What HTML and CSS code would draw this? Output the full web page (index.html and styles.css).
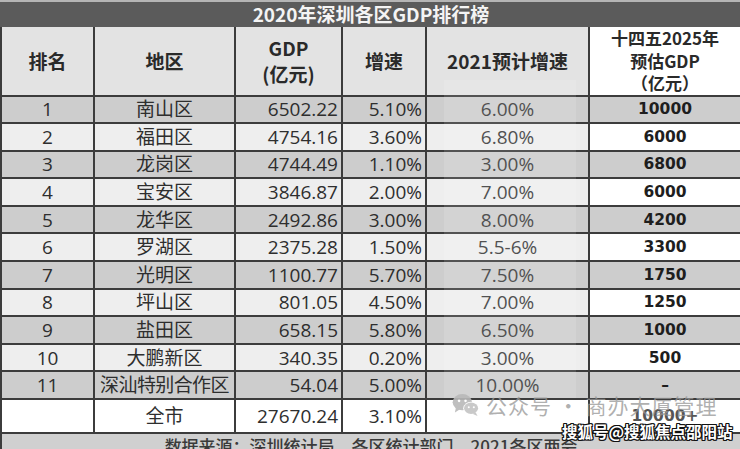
FILE: index.html
```html
<!DOCTYPE html>
<html lang="zh">
<head>
<meta charset="utf-8">
<title>2020年深圳各区GDP排行榜</title>
<link rel="stylesheet" href="styles.css">
</head>
<body>
<div class="page">
  <table class="gdp">
    <colgroup>
      <col class="c1"><col class="c2"><col class="c3"><col class="c4"><col class="c5"><col class="c6">
    </colgroup>
    <thead>
      <tr class="title-row"><th colspan="6">2020年深圳各区GDP排行榜</th></tr>
      <tr class="head-row">
        <th>排名</th>
        <th>地区</th>
        <th>GDP<br>(亿元)</th>
        <th>增速</th>
        <th>2021预计增速</th>
        <th class="plan">十四五2025年<br>预估GDP<br>（亿元）</th>
      </tr>
    </thead>
    <tbody>
      <tr class="odd"><td>1</td><td>南山区</td><td class="num">6502.22</td><td class="num">5.10%</td><td class="fc">6.00%</td><td class="est">10000</td></tr>
      <tr class="even"><td>2</td><td>福田区</td><td class="num">4754.16</td><td class="num">3.60%</td><td class="fc">6.80%</td><td class="est">6000</td></tr>
      <tr class="odd"><td>3</td><td>龙岗区</td><td class="num">4744.49</td><td class="num">1.10%</td><td class="fc">3.00%</td><td class="est">6800</td></tr>
      <tr class="even"><td>4</td><td>宝安区</td><td class="num">3846.87</td><td class="num">2.00%</td><td class="fc">7.00%</td><td class="est">6000</td></tr>
      <tr class="odd"><td>5</td><td>龙华区</td><td class="num">2492.86</td><td class="num">3.00%</td><td class="fc">8.00%</td><td class="est">4200</td></tr>
      <tr class="even"><td>6</td><td>罗湖区</td><td class="num">2375.28</td><td class="num">1.50%</td><td class="fc">5.5-6%</td><td class="est">3300</td></tr>
      <tr class="odd"><td>7</td><td>光明区</td><td class="num">1100.77</td><td class="num">5.70%</td><td class="fc">7.50%</td><td class="est">1750</td></tr>
      <tr class="even"><td>8</td><td>坪山区</td><td class="num">801.05</td><td class="num">4.50%</td><td class="fc">7.00%</td><td class="est">1250</td></tr>
      <tr class="odd"><td>9</td><td>盐田区</td><td class="num">658.15</td><td class="num">5.80%</td><td class="fc">6.50%</td><td class="est">1000</td></tr>
      <tr class="even"><td>10</td><td>大鹏新区</td><td class="num">340.35</td><td class="num">0.20%</td><td class="fc">3.00%</td><td class="est">500</td></tr>
      <tr class="odd"><td>11</td><td class="tight">深汕特别合作区</td><td class="num">54.04</td><td class="num">5.00%</td><td class="fc">10.00%</td><td class="est">–</td></tr>
      <tr class="total"><td></td><td>全市</td><td class="num">27670.24</td><td class="num">3.10%</td><td></td><td class="est">10000+</td></tr>
      <tr class="source"><td colspan="6">数据来源：深圳统计局、各区统计部门、2021各区两会</td></tr>
    </tbody>
  </table>

  <div class="wm-rect"></div>

  <div class="wm-wechat">
    <svg class="wx" viewBox="0 0 30 26" width="28" height="24" aria-hidden="true">
      <ellipse cx="11" cy="10" rx="10.5" ry="8.8" fill="#b9b9b9"/>
      <path d="M4 16 L3 21 L8.5 17.5 Z" fill="#b9b9b9"/>
      <circle cx="7.5" cy="8.5" r="1.4" fill="#fff"/>
      <circle cx="14.5" cy="8.5" r="1.4" fill="#fff"/>
      <ellipse cx="20.5" cy="16.5" rx="8.5" ry="7" fill="#fff"/>
      <ellipse cx="20.5" cy="16.5" rx="7.6" ry="6.2" fill="#c4c4c4"/>
      <path d="M25.5 21 L27.5 25 L22 22.5 Z" fill="#c4c4c4"/>
      <circle cx="18" cy="15.5" r="1.1" fill="#fff"/>
      <circle cx="23.5" cy="15.5" r="1.1" fill="#fff"/>
    </svg>
    <span>公众号 · 商办大厦管理</span>
  </div>

  <div class="wm-sohu">搜狐号@搜狐焦点邵阳站</div>
</div>
</body>
</html>
```

FILE: styles.css
```css
html, body {
  margin: 0;
  padding: 0;
  background: #ffffff;
}

body {
  width: 740px;
  height: 449px;
  overflow: hidden;
  font-family: "Open Sans", "Noto Sans CJK SC", sans-serif;
  color: #2e2e2e;
}

.page {
  position: relative;
  width: 740px;
  height: 449px;
  overflow: hidden;
}

.gdp {
  width: 740px;
  table-layout: fixed;
  border-collapse: collapse;
  font-size: 19px;
}

.c1 { width: 93px; }
.c2 { width: 141px; }
.c3 { width: 107px; }
.c4 { width: 84px; }
.c5 { width: 163px; }
.c6 { width: 152px; }

.gdp th,
.gdp td {
  border: 2px solid #3c3c3c;
  padding: 0 4px;
  text-align: center;
  vertical-align: middle;
  white-space: nowrap;
  overflow: hidden;
  line-height: 22px;
}

.title-row th {
  height: 23px;
  background: #5b5b5b;
  color: #f4f4f4;
  font-family: "Noto Sans CJK SC", sans-serif;
  font-weight: 700;
  font-size: 19px;
  line-height: 23px;
  border-color: #5b5b5b;
  border-top-color: #b5b5b5;
  padding: 0;
}

.head-row th {
  height: 66px;
  background: #e3e3e3;
  font-family: "Noto Sans CJK SC", sans-serif;
  font-weight: 700;
  font-size: 19px;
  line-height: 26px;
  color: #2a2a2a;
}

.head-row th.plan {
  font-size: 17px;
  line-height: 22.5px;
  background: #ffffff;
}

.gdp tbody td {
  height: 25.6px;
  font-family: "Open Sans", "Noto Sans CJK SC", sans-serif;
}

.gdp tbody tr.odd td {
  background: #cdcdcd;
}

.gdp tbody tr.even td {
  background: #eeeeee;
}

.gdp tbody tr.even td.est {
  background: #ffffff;
}

.gdp td.num {
  text-align: right;
  padding-right: 3px;
}

.gdp td.fc {
  color: #3a3a3a;
}

.gdp td.tight {
  padding: 0;
  letter-spacing: -0.6px;
}

.gdp td.est {
  font-family: "DejaVu Sans", sans-serif;
  font-weight: 700;
  font-size: 15.5px;
  color: #1e1e1e;
}

.gdp tbody tr.total td {
  height: 32px;
  background: #ffffff;
}

.gdp tbody tr.total td.est {
  color: #555555;
}

.gdp tbody tr.source td {
  height: 30px;
  background: #d0d0d0;
  font-family: "Noto Sans CJK SC", sans-serif;
  font-size: 17px;
  font-weight: 500;
  color: #3a3a3a;
  vertical-align: top;
  line-height: 22px;
  padding: 1px 0 0 0;
}

/* faint watermark rectangle over the forecast column */
.wm-rect {
  position: absolute;
  left: 444px;
  top: 80px;
  width: 132px;
  height: 318px;
  background: rgba(255, 255, 255, 0.12);
  pointer-events: none;
}

.wm-wechat {
  position: absolute;
  left: 452px;
  top: 392px;
  display: flex;
  align-items: center;
  gap: 6px;
  color: rgba(150, 150, 150, 0.75);
  font-family: "Noto Sans CJK SC", sans-serif;
  font-size: 21px;
  line-height: 26px;
  letter-spacing: 1px;
  pointer-events: none;
}

.wm-wechat .wx {
  flex: none;
  opacity: 0.9;
}

.wm-sohu {
  position: absolute;
  left: 562px;
  top: 421px;
  font-family: "Noto Sans CJK SC", sans-serif;
  font-weight: 700;
  font-size: 15.5px;
  line-height: 20px;
  color: #ffffff;
  text-shadow:
    1px 0 0 #111, -1px 0 0 #111, 0 1px 0 #111, 0 -1px 0 #111,
    1px 1px 0 #111, -1px -1px 0 #111, 1px -1px 0 #111, -1px 1px 0 #111;
  pointer-events: none;
}
```
